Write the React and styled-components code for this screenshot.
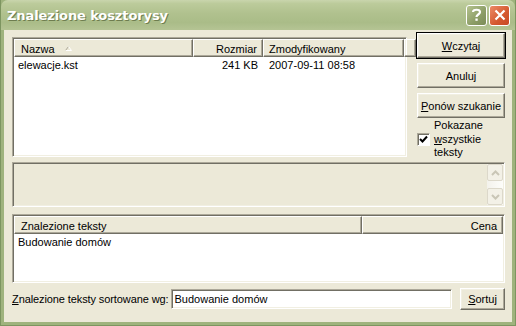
import React from 'react'
import styled, { createGlobalStyle } from 'styled-components'

const Global = createGlobalStyle`
  html, body { margin: 0; padding: 0; background: #ece9d8; }
  body { font-family: "Liberation Sans", Arial, sans-serif; font-size: 11px; color: #000; }
`

const Window = styled.div`
  width: 516px;
  height: 326px;
  box-sizing: border-box;
  display: flex;
  flex-direction: column;
  background: #9fb37d;
  border: 1px solid #7d9560;
  border-top: none;
  overflow: hidden;
`

const TitleBar = styled.div`
  height: 30px;
  flex: none;
  display: flex;
  align-items: center;
  padding: 0 5px 0 6px;
  background: linear-gradient(#c9d5ad 0%, #bccb9b 12%, #b0c18e 45%, #aabc88 75%, #b5c494 100%);
  border-radius: 7px 7px 0 0;
`

const Title = styled.div`
  flex: 1;
  color: #fff;
  font-family: "DejaVu Sans", Verdana, sans-serif;
  font-weight: bold;
  font-size: 13px;
  letter-spacing: -0.1px;
  text-shadow: 1px 1px 0 #6e7d4f;
`

const CaptionButton = styled.div`
  width: 21px;
  height: 21px;
  box-sizing: border-box;
  margin-left: 2px;
  border: 1px solid #fff;
  border-radius: 3px;
  display: flex;
  align-items: center;
  justify-content: center;
  background: ${p => p.$close
    ? 'linear-gradient(135deg, #ec8b67, #d4582f 60%, #c84a26)'
    : 'linear-gradient(135deg, #b5c38f, #8c9d66 60%, #7b8c57)'};
`

const Body = styled.div`
  flex: 1;
  display: flex;
  flex-direction: column;
  margin: 0 3px 3px 3px;
  padding: 0 7px 0 8px;
  background: #ece9d8;
`

const TopRow = styled.div`
  display: flex;
  gap: 10px;
  height: 123px;
  margin-top: 3px;
`

const Sunken = styled.div`
  box-sizing: border-box;
  border: 1px solid;
  border-color: #aca899 #fff #fff #aca899;
  box-shadow: inset 1px 1px 0 #716f64, inset -1px -1px 0 #f1efe2;
  padding: 1px;
`

const ListView = styled(Sunken)`
  width: ${p => p.$width || 'auto'};
  height: ${p => p.$height}px;
  margin-top: ${p => p.$top || 0}px;
  background: #fff;
  display: flex;
  flex-direction: column;
`

const HeaderRow = styled.div`
  display: grid;
  grid-template-columns: ${p => p.$cols};
  height: 18px;
  background: #ece9d8;
`

const HeaderCell = styled.div`
  box-sizing: border-box;
  display: flex;
  align-items: center;
  justify-content: ${p => p.$right ? 'flex-end' : 'flex-start'};
  gap: 10px;
  padding: 1px 5px 0 ${p => p.$pl || 5}px;
  border: 1px solid;
  border-color: #fff #716f64 #716f64 #fff;
  box-shadow: inset -1px -1px 0 #aca899;
  white-space: nowrap;
`

const Row = styled.div`
  display: grid;
  grid-template-columns: ${p => p.$cols};
  height: 16px;
  align-items: center;
`

const Cell = styled.div`
  padding: 0 5px 0 ${p => p.$pl || 5}px;
  text-align: ${p => p.$right ? 'right' : 'left'};
  white-space: nowrap;
`

const ButtonColumn = styled.div`
  width: 88px;
  display: flex;
  flex-direction: column;
  gap: 5px;
`

const Button = styled.button`
  box-sizing: border-box;
  flex: none;
  width: ${p => p.$width || '88px'};
  height: ${p => p.$height || 25}px;
  padding: 0;
  font: inherit;
  color: #000;
  background: #ece9d8;
  border: 1px solid;
  border-color: #fff #716f64 #716f64 #fff;
  box-shadow: inset -1px -1px 0 #aca899, inset 1px 1px 0 #f1efe2;
  outline: ${p => p.$default ? '1px solid #000' : 'none'};
  outline-offset: 0;
`

const CheckRow = styled.label`
  display: flex;
  align-items: center;
  gap: 4px;
  margin-top: -4px;
  line-height: 13.5px;
`

const CheckBox = styled.span`
  width: 13px;
  height: 13px;
  box-sizing: border-box;
  flex: none;
  background: #fff;
  border: 1px solid;
  border-color: #aca899 #fff #fff #aca899;
  box-shadow: inset 1px 1px 0 #716f64;
  display: flex;
  align-items: center;
  justify-content: center;
`

const Panel = styled(Sunken)`
  height: 45px;
  margin-top: 6px;
  background: #ece9d8;
  display: flex;
  justify-content: flex-end;
`

const ScrollBar = styled.div`
  width: 16px;
  display: flex;
  flex-direction: column;
  justify-content: space-between;
  background: linear-gradient(90deg, #f3f2ec, #fdfdfa);
`

const ScrollButton = styled.div`
  height: 17px;
  box-sizing: border-box;
  border: 1px solid #dcd8ca;
  border-radius: 2px;
  background: #f3f1e7;
  display: flex;
  align-items: center;
  justify-content: center;
`

const BottomRow = styled.div`
  display: flex;
  align-items: center;
  margin-top: 5px;
  height: 21px;
`

const Label = styled.div`
  flex: none;
  margin-right: 2px;
  letter-spacing: -0.1px;
  white-space: nowrap;
`

const Input = styled(Sunken)`
  flex: 1;
  height: 20px;
  background: #fff;
  padding: 2px 3px;
  line-height: 14px;
  margin-right: 8px;
`

const U = styled.span`
  text-decoration: underline;
`

const SortArrow = () => (
  <svg width="7" height="5" viewBox="0 0 7 5">
    <path d="M0.5 4.5 L3.5 0.5" stroke="#aca899" fill="none" />
    <path d="M3.5 0.5 L6.5 4.5 L0.5 4.5" stroke="#fff" fill="none" />
  </svg>
)

const Chevron = ({ up }) => (
  <svg width="9" height="6" viewBox="0 0 9 6">
    <path d={up ? 'M1 5 L4.5 1.5 L8 5' : 'M1 1 L4.5 4.5 L8 1'} stroke="#c9c6b6" strokeWidth="2" fill="none" />
  </svg>
)

const filesCols = '179px 70px 141px 1fr'
const textsCols = '348px 1fr'

export default function App() {
  return (
    <>
      <Global />
      <Window>
        <TitleBar>
          <Title>Znalezione kosztorysy</Title>
          <CaptionButton>
            <svg width="11" height="14" viewBox="0 0 11 14">
              <path d="M2 4 C2 1 9 1 9 4 C9 6.5 5.5 6.5 5.5 9" stroke="#fff" strokeWidth="2.2" fill="none" />
              <rect x="4.4" y="10.5" width="2.3" height="2.3" fill="#fff" />
            </svg>
          </CaptionButton>
          <CaptionButton $close>
            <svg width="12" height="12" viewBox="0 0 12 12">
              <path d="M1.5 1.5 L10.5 10.5 M10.5 1.5 L1.5 10.5" stroke="#fff" strokeWidth="2.2" />
            </svg>
          </CaptionButton>
        </TitleBar>
        <Body>
          <TopRow>
            <ListView $width="395px" $height={120} $top={4}>
              <HeaderRow $cols={filesCols}>
                <HeaderCell $pl={6}>Nazwa <SortArrow /></HeaderCell>
                <HeaderCell $right>Rozmiar</HeaderCell>
                <HeaderCell>Zmodyfikowany</HeaderCell>
                <HeaderCell />
              </HeaderRow>
              <Row $cols={filesCols}>
                <Cell $pl={4}>elewacje.kst</Cell>
                <Cell $right>241 KB</Cell>
                <Cell $pl={6}>2007-09-11 08:58</Cell>
              </Row>
            </ListView>
            <ButtonColumn>
              <Button $default><U>W</U>czytaj</Button>
              <Button>Anuluj</Button>
              <Button><U>P</U>onów szukanie</Button>
              <CheckRow>
                <CheckBox>
                  <svg width="9" height="9" viewBox="0 0 9 9">
                    <path d="M1 4 L3.5 6.5 L8 1.5" stroke="#000" strokeWidth="2" fill="none" />
                  </svg>
                </CheckBox>
                <span>Pokazane<br /><U>w</U>szystkie<br />teksty</span>
              </CheckRow>
            </ButtonColumn>
          </TopRow>
          <Panel>
            <ScrollBar>
              <ScrollButton><Chevron up /></ScrollButton>
              <ScrollButton><Chevron /></ScrollButton>
            </ScrollBar>
          </Panel>
          <ListView $height={69} $top={7}>
            <HeaderRow $cols={textsCols}>
              <HeaderCell $pl={6}>Znalezione teksty</HeaderCell>
              <HeaderCell $right>Cena</HeaderCell>
            </HeaderRow>
            <Row $cols={textsCols}>
              <Cell $pl={4}>Budowanie domów</Cell>
            </Row>
          </ListView>
          <BottomRow>
            <Label><U>Z</U>nalezione teksty sortowane wg:</Label>
            <Input>Budowanie domów</Input>
            <Button $width="45px" $height={22}><U>S</U>ortuj</Button>
          </BottomRow>
        </Body>
      </Window>
    </>
  )
}
